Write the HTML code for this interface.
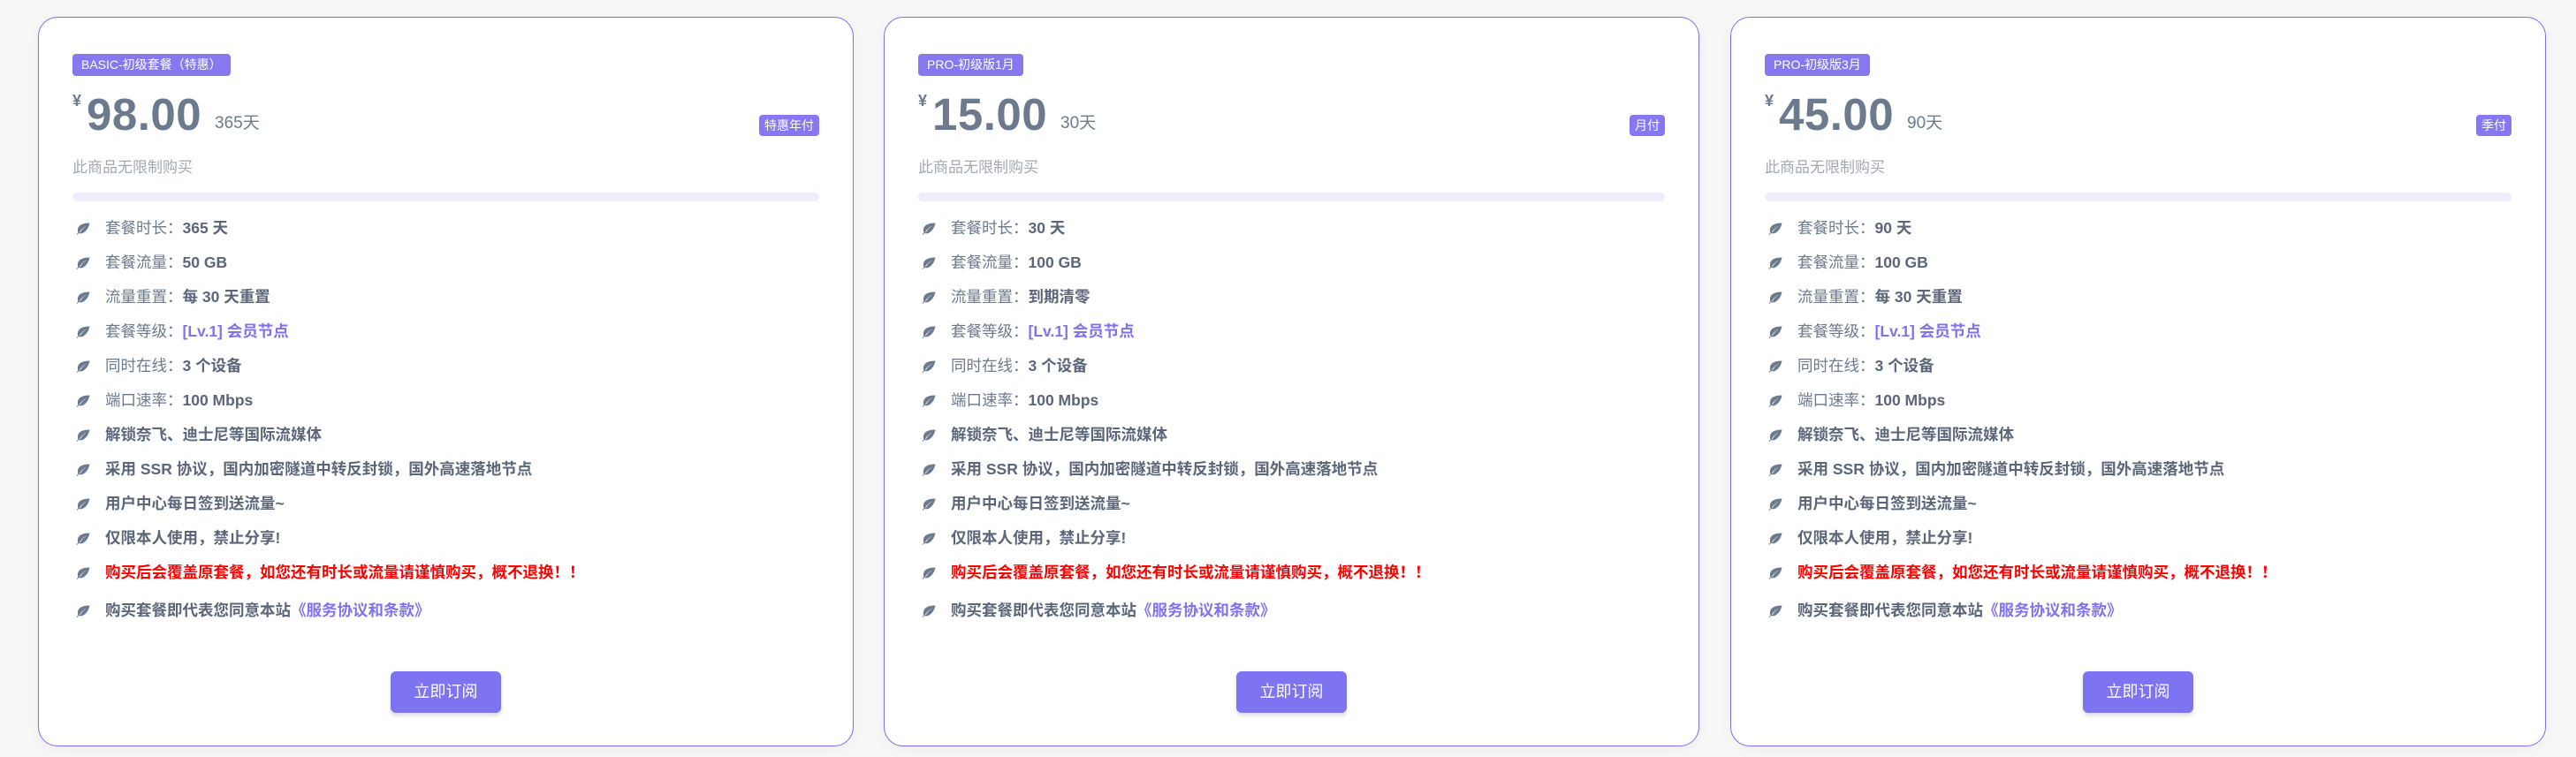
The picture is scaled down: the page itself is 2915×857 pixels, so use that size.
<!DOCTYPE html>
<html><head><meta charset="utf-8"><style>
*{margin:0;padding:0;box-sizing:border-box}
body{width:2915px;height:857px;background:#f7f7f8;font-family:"Liberation Sans","Noto Sans CJK SC",sans-serif;position:relative;overflow:hidden}
.card{position:absolute;top:19px;width:923px;height:826px;background:#fff;border:1.5px solid #7b6ff0;border-radius:22px;box-shadow:0 4px 16px rgba(0,0,0,0.04)}
.badge{position:absolute;left:38px;top:41px;height:25px;background:#8778f2;color:#fff;font-size:14px;line-height:25px;padding:0 10px;border-radius:4px}
.yen{position:absolute;left:38px;top:84px;font-size:18px;color:#6b7a8d;font-weight:bold}
.price{position:absolute;left:54px;top:80px;font-size:51px;font-weight:bold;color:#6b7a8d;letter-spacing:0.5px}
.per{position:absolute;top:104px;font-size:19px;color:#6b7a8d}
.tag{position:absolute;right:38px;top:110px;height:24px;background:#8778f2;color:#fff;font-size:14px;line-height:24px;padding:0 6px;border-radius:4px}
.note{position:absolute;left:38px;top:155px;font-size:17px;color:#a3a9b3}
.bar{position:absolute;left:38px;right:38px;top:198px;height:10px;background:#eeedfb;border-radius:5px}
ul{position:absolute;left:42px;top:219px;list-style:none}
li{height:39px;line-height:39px;font-size:17.5px;color:#6b7a8d;white-space:nowrap;display:flex;align-items:center}
li svg{width:16px;height:14px;margin-right:17px;flex:none}
li b{color:#5b6679}
li.last{margin-top:4px}
.p{color:#8072ee}
.r{color:#ff0000;font-weight:bold}
.btn{position:absolute;left:398px;top:740px;width:125px;height:47px;background:#7e74f1;color:#fff;border-radius:6px;font-size:18px;line-height:47px;text-align:center;box-shadow:0 3px 5px rgba(0,0,0,0.15)}
</style></head><body>
<svg width="0" height="0" style="position:absolute"><defs><symbol id="lf" viewBox="0 0 16 14"><path d="M15.5 0.5C9 0.5 3 2 2 7.5c-0.3 1.6 0 3 0.5 3.8L0.5 13.5l0.8 0.4 2-2.2c1 0.8 3 1 5-0.2C12.5 9 14.5 5 15.5 0.5z M4 10.5C6 7.5 9 5 12 3.5 9 5.5 6.5 8 4.8 11z" fill="#6b7a8d" fill-rule="evenodd"/></symbol></defs></svg>

<div class="card" style="left:43px">
<div class="badge">BASIC-初级套餐（特惠）</div>
<div class="yen">¥</div><div class="price">98.00</div><div class="per" style="left:199px">365天</div>
<div class="tag">特惠年付</div>
<div class="note">此商品无限制购买</div>
<div class="bar"></div>
<ul>
<li><svg><use href="#lf"/></svg>套餐时长：<b>365 天</b></li>
<li><svg><use href="#lf"/></svg>套餐流量：<b>50 GB</b></li>
<li><svg><use href="#lf"/></svg>流量重置：<b>每 30 天重置</b></li>
<li><svg><use href="#lf"/></svg>套餐等级：<b class="p">[Lv.1] 会员节点</b></li>
<li><svg><use href="#lf"/></svg>同时在线：<b>3 个设备</b></li>
<li><svg><use href="#lf"/></svg>端口速率：<b>100 Mbps</b></li>
<li><svg><use href="#lf"/></svg><b>解锁奈飞、迪士尼等国际流媒体</b></li>
<li><svg><use href="#lf"/></svg><b>采用 SSR 协议，国内加密隧道中转反封锁，国外高速落地节点</b></li>
<li><svg><use href="#lf"/></svg><b>用户中心每日签到送流量~</b></li>
<li><svg><use href="#lf"/></svg><b>仅限本人使用，禁止分享!</b></li>
<li><svg><use href="#lf"/></svg><span class="r">购买后会覆盖原套餐，如您还有时长或流量请谨慎购买，概不退换！！</span></li>
<li class="last"><svg><use href="#lf"/></svg><b>购买套餐即代表您同意本站</b><b class="p">《服务协议和条款》</b></li>
</ul>
<div class="btn">立即订阅</div>
</div>

<div class="card" style="left:1000px">
<div class="badge">PRO-初级版1月</div>
<div class="yen">¥</div><div class="price">15.00</div><div class="per" style="left:199px">30天</div>
<div class="tag">月付</div>
<div class="note">此商品无限制购买</div>
<div class="bar"></div>
<ul>
<li><svg><use href="#lf"/></svg>套餐时长：<b>30 天</b></li>
<li><svg><use href="#lf"/></svg>套餐流量：<b>100 GB</b></li>
<li><svg><use href="#lf"/></svg>流量重置：<b>到期清零</b></li>
<li><svg><use href="#lf"/></svg>套餐等级：<b class="p">[Lv.1] 会员节点</b></li>
<li><svg><use href="#lf"/></svg>同时在线：<b>3 个设备</b></li>
<li><svg><use href="#lf"/></svg>端口速率：<b>100 Mbps</b></li>
<li><svg><use href="#lf"/></svg><b>解锁奈飞、迪士尼等国际流媒体</b></li>
<li><svg><use href="#lf"/></svg><b>采用 SSR 协议，国内加密隧道中转反封锁，国外高速落地节点</b></li>
<li><svg><use href="#lf"/></svg><b>用户中心每日签到送流量~</b></li>
<li><svg><use href="#lf"/></svg><b>仅限本人使用，禁止分享!</b></li>
<li><svg><use href="#lf"/></svg><span class="r">购买后会覆盖原套餐，如您还有时长或流量请谨慎购买，概不退换！！</span></li>
<li class="last"><svg><use href="#lf"/></svg><b>购买套餐即代表您同意本站</b><b class="p">《服务协议和条款》</b></li>
</ul>
<div class="btn">立即订阅</div>
</div>

<div class="card" style="left:1958px">
<div class="badge">PRO-初级版3月</div>
<div class="yen">¥</div><div class="price">45.00</div><div class="per" style="left:199px">90天</div>
<div class="tag">季付</div>
<div class="note">此商品无限制购买</div>
<div class="bar"></div>
<ul>
<li><svg><use href="#lf"/></svg>套餐时长：<b>90 天</b></li>
<li><svg><use href="#lf"/></svg>套餐流量：<b>100 GB</b></li>
<li><svg><use href="#lf"/></svg>流量重置：<b>每 30 天重置</b></li>
<li><svg><use href="#lf"/></svg>套餐等级：<b class="p">[Lv.1] 会员节点</b></li>
<li><svg><use href="#lf"/></svg>同时在线：<b>3 个设备</b></li>
<li><svg><use href="#lf"/></svg>端口速率：<b>100 Mbps</b></li>
<li><svg><use href="#lf"/></svg><b>解锁奈飞、迪士尼等国际流媒体</b></li>
<li><svg><use href="#lf"/></svg><b>采用 SSR 协议，国内加密隧道中转反封锁，国外高速落地节点</b></li>
<li><svg><use href="#lf"/></svg><b>用户中心每日签到送流量~</b></li>
<li><svg><use href="#lf"/></svg><b>仅限本人使用，禁止分享!</b></li>
<li><svg><use href="#lf"/></svg><span class="r">购买后会覆盖原套餐，如您还有时长或流量请谨慎购买，概不退换！！</span></li>
<li class="last"><svg><use href="#lf"/></svg><b>购买套餐即代表您同意本站</b><b class="p">《服务协议和条款》</b></li>
</ul>
<div class="btn">立即订阅</div>
</div>
</body></html>
